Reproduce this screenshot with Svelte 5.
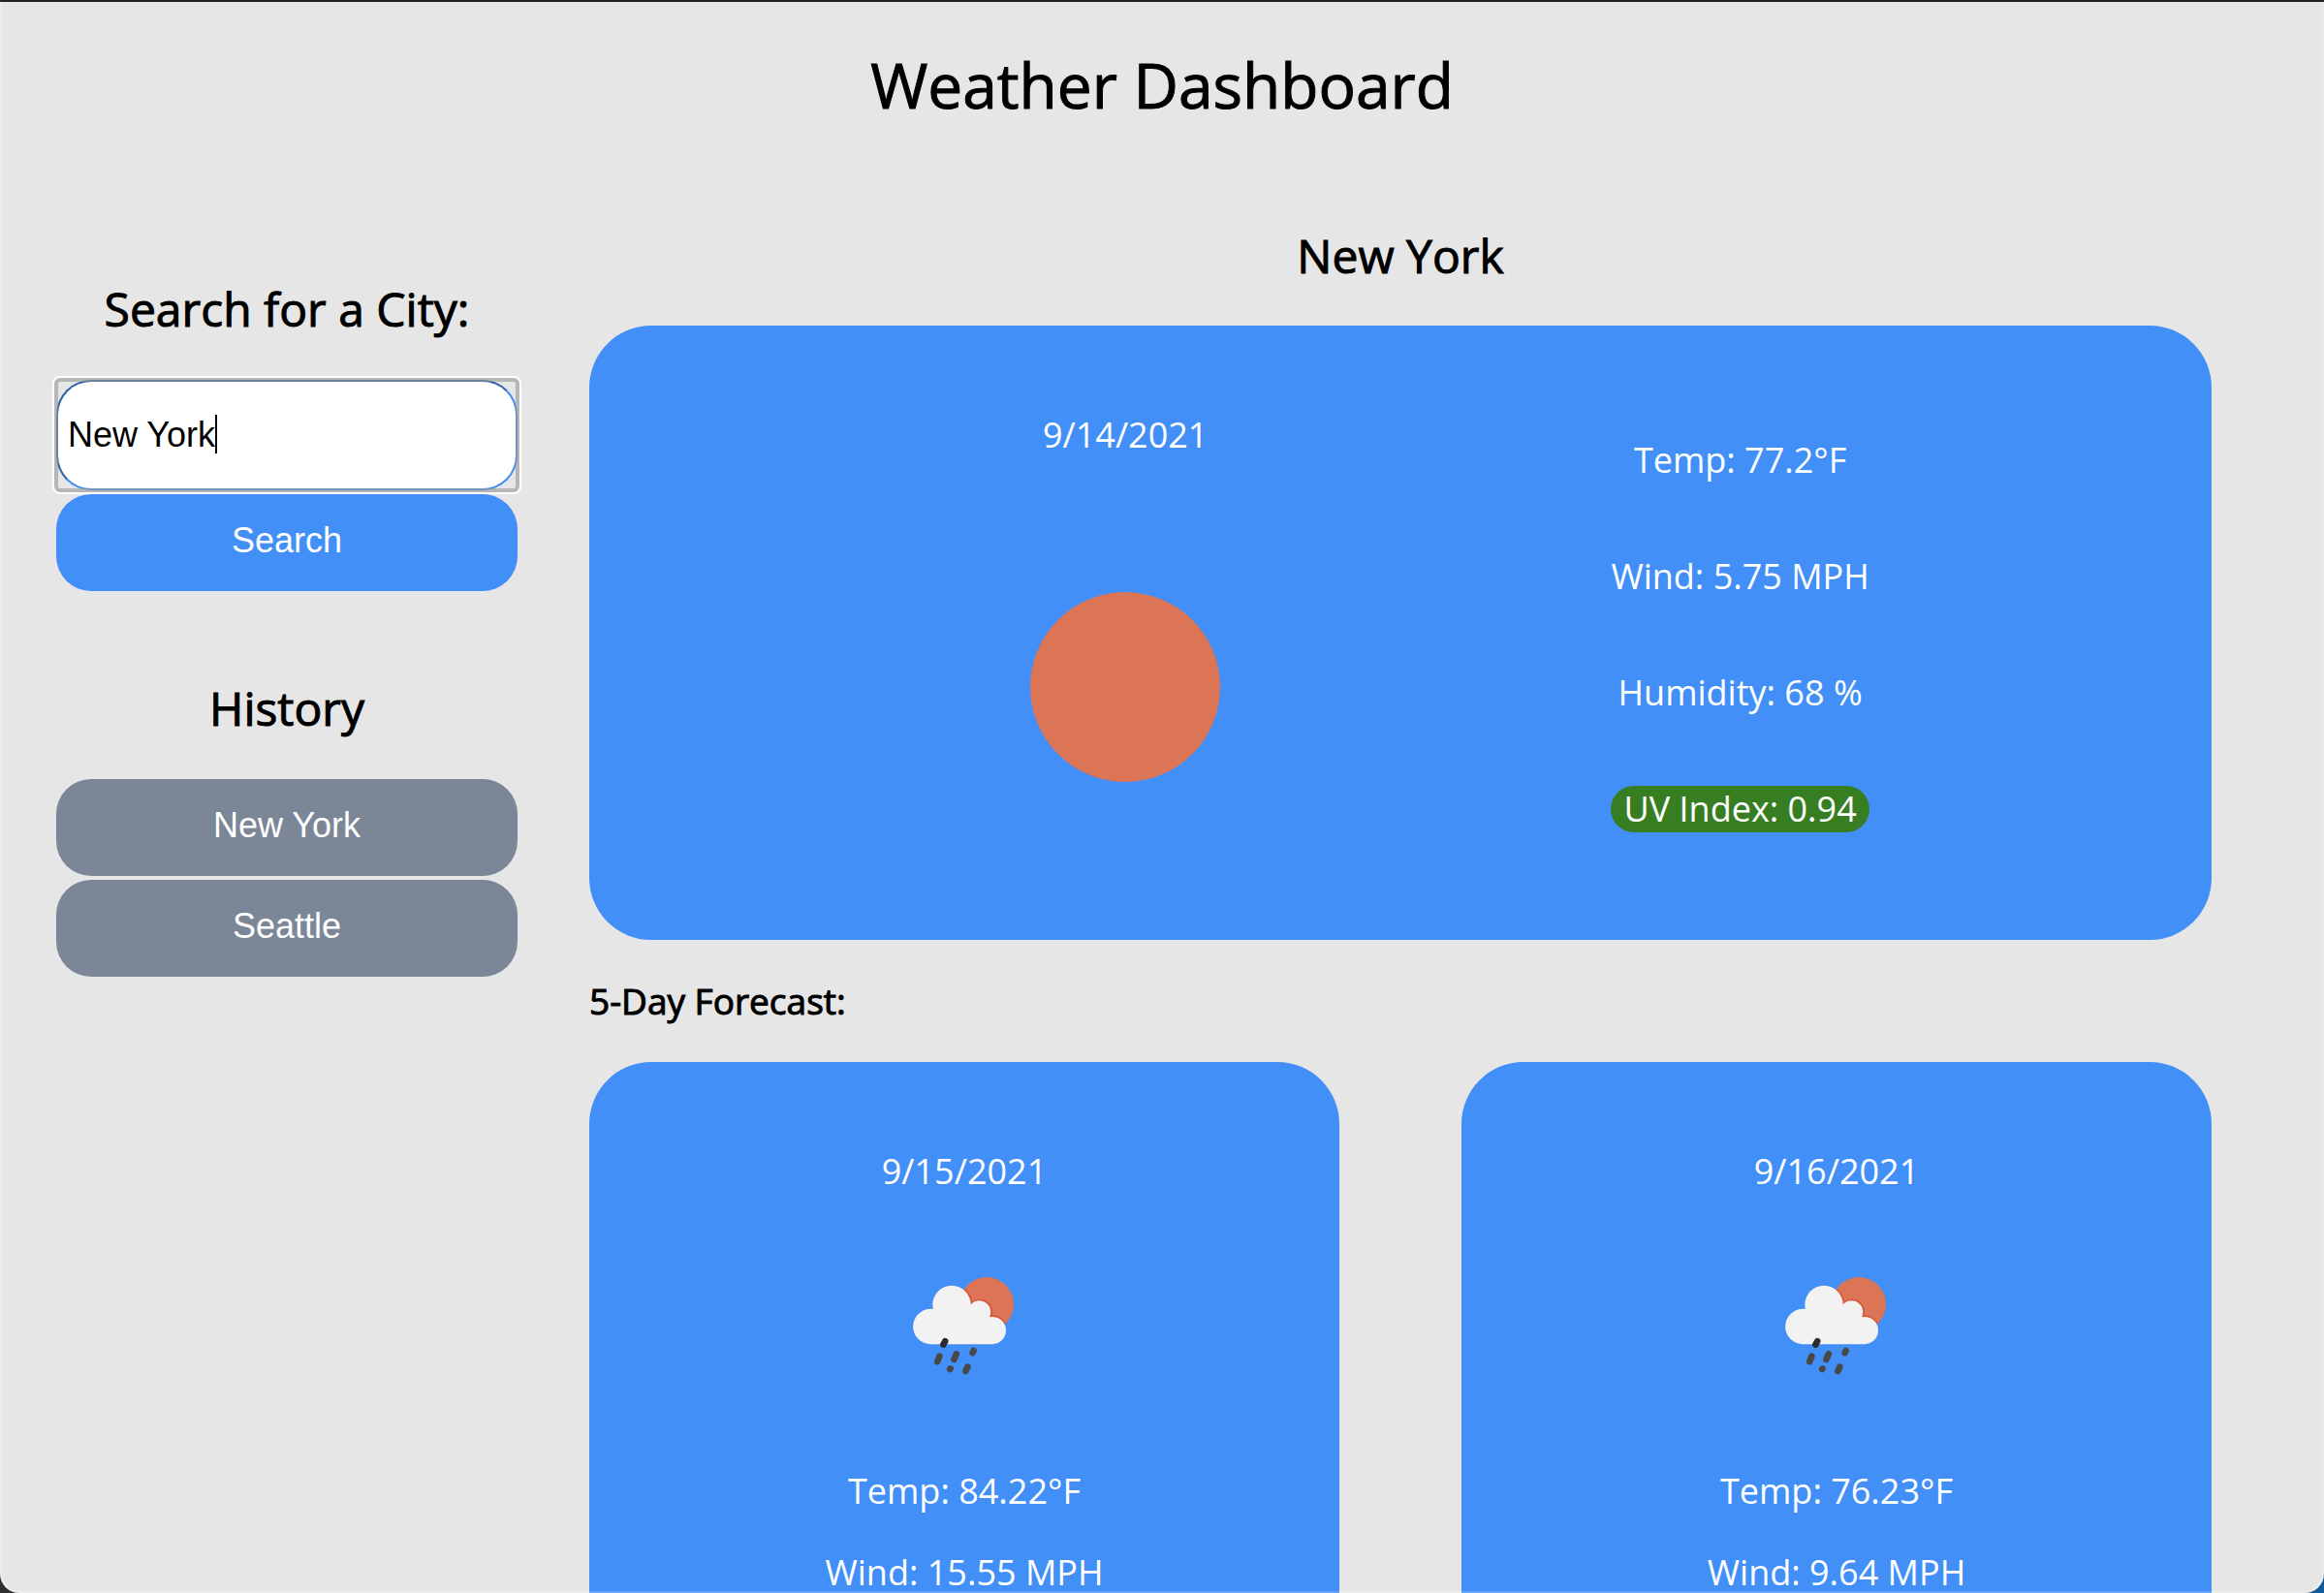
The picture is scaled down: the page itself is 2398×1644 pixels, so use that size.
<script>
  let city = $state('New York');

  const history = ['New York', 'Seattle'];

  const today = {
    date: '9/14/2021',
    temp: '77.2°F',
    wind: '5.75 MPH',
    humidity: '68 %',
    uv: '0.94'
  };

  const forecast = [
    { date: '9/15/2021', temp: '84.22°F', wind: '15.55 MPH' },
    { date: '9/16/2021', temp: '76.23°F', wind: '9.64 MPH' }
  ];
</script>

<div class="window">
  <div class="page">
    <header>
      <h1>Weather Dashboard</h1>
    </header>

    <div class="layout">
      <aside>
        <form onsubmit={(e) => e.preventDefault()}>
          <h2><label for="city">Search for a City:</label></h2>
          <div class="field">
            <input id="city" type="text" autocomplete="off" bind:value={city} />
            <span class="caret"></span>
          </div>
          <button class="btn search" type="submit">Search</button>
        </form>

        <section class="history">
          <h2>History</h2>
          {#each history as name}
            <button class="btn past" type="button">{name}</button>
          {/each}
        </section>
      </aside>

      <main>
        <h2>New York</h2>
        <section class="card today">
          <div class="summary">
            <p>{today.date}</p>
            <svg class="sun" viewBox="0 0 400 400" role="img" aria-label="Clear sky">
              <circle cx="200" cy="200" r="98" fill="#db7555" />
            </svg>
          </div>
          <div class="stats">
            <p>Temp: {today.temp}</p>
            <p>Wind: {today.wind}</p>
            <p>Humidity: {today.humidity}</p>
            <p class="uv">UV Index: {today.uv}</p>
          </div>
        </section>

        <h3>5-Day Forecast:</h3>
        <div class="forecast">
          {#each forecast as day, i}
            <section class="card day">
              <p>{day.date}</p>
              <svg class="rain" viewBox="0 1 200 200" role="img" aria-label="Rain">
                <defs>
                  <clipPath id="sun-{i}"><circle cx="123" cy="78" r="28" /></clipPath>
                </defs>
                <circle cx="123" cy="78" r="28" fill="#db7555" />
                <g clip-path="url(#sun-{i})" fill="#d9583a">
                  <circle cx="87" cy="78.5" r="21.5" />
                  <circle cx="116" cy="86" r="13.2" />
                  <circle cx="129" cy="105" r="15.7" />
                </g>
                <g fill="#f2f2f2">
                  <circle cx="87" cy="78.5" r="19.7" />
                  <circle cx="65.3" cy="101" r="18.2" />
                  <circle cx="115.5" cy="86" r="11.7" />
                  <circle cx="129" cy="105" r="14" />
                  <path d="M65 119.2V96L75 84L116 80L130 95V119.2Z" />
                </g>
                <g stroke="#484848" stroke-width="6.6" stroke-linecap="round">
                  <path d="M80.2 116.2L78.4 119.6" stroke="#2c2c2c" />
                  <path d="M74.4 131.6L72.2 137.2" />
                  <path d="M91.8 129.4L89.4 135" />
                  <path d="M109.6 126L108.6 128.2" />
                  <path d="M85.6 144.4L85.2 145" />
                  <path d="M103.4 142.6L101.4 147" />
                </g>
              </svg>
              <p>Temp: {day.temp}</p>
              <p>Wind: {day.wind}</p>
            </section>
          {/each}
        </div>
      </main>
    </div>
  </div>
</div>

<style>
  :global(body) {
    margin: 0;
    background: linear-gradient(90deg, #2f2f2f 50%, #105a9a 50%);
  }

  .window {
    position: relative;
    box-sizing: border-box;
    height: 100vh;
    border-top: 2px solid #222;
    border-radius: 0 0 20px 20px;
    overflow: hidden;
    background: #e6e6e6;
    color: #000;
    font-family: 'Open Sans', 'Noto Sans', sans-serif;
    font-size: 36px;
    line-height: 48px;
  }

  /* Light rim along the sides and bottom of the window */
  .window::after {
    content: '';
    position: absolute;
    inset: 0;
    border: 2px solid rgba(255, 255, 255, 0.2);
    border-top: 0;
    border-radius: 0 0 20px 20px;
    pointer-events: none;
  }

  .page {
    height: 100%;
    overflow: hidden auto;
    scrollbar-width: none;
  }

  h1,
  h2,
  h3,
  p {
    margin: 0;
  }

  h1,
  h2,
  h3 {
    font-weight: 400;
    -webkit-text-stroke: 1px #000;
  }

  h1 {
    padding-top: 43px;
    font-size: 64px;
    line-height: 86px;
    text-align: center;
  }

  h2 {
    margin-bottom: 40px;
    font-size: 48px;
    line-height: 66px;
    text-align: center;
  }

  main h2 {
    margin-bottom: 39px;
  }

  h3 {
    margin: 36px 0;
    font-size: 37px;
    line-height: 54px;
  }

  .layout {
    display: grid;
    grid-template-columns: 476fr 1674fr;
    column-gap: 74px;
    padding: 100px 116px 0 58px;
  }

  aside {
    padding-top: 55px;
  }

  .field {
    position: relative;
    margin-bottom: 4px;
  }

  .field::after {
    content: '';
    position: absolute;
    inset: -2px;
    border: 4px solid rgba(150, 150, 150, 0.6);
    border-radius: 6px;
    box-shadow: 0 0 0 2px #fff;
    pointer-events: none;
  }

  input,
  .btn {
    display: block;
    box-sizing: border-box;
    width: 100%;
    border-radius: 36px;
    font-family: 'Liberation Sans', Arial, sans-serif;
    font-size: 36px;
    line-height: 40px;
  }

  input {
    height: 114px;
    padding: 0 10px;
    border: 2px solid #428ff7;
    border-top-color: #2a60a8;
    border-left-color: #2a60a8;
    outline: none;
    background: #fff;
    color: #000;
    caret-color: transparent;
  }

  .caret {
    position: absolute;
    top: 36px;
    left: 164px;
    width: 2px;
    height: 40px;
    background: #000;
  }

  .btn {
    margin-bottom: 4px;
    padding: 28px 0 32px;
    border: 0;
    color: #fff;
    cursor: pointer;
  }

  .search {
    background: #428ff7;
  }

  .past {
    background: #7b8797;
  }

  .history {
    margin-top: 88px;
  }

  .card {
    border-radius: 64px;
    background: #428ff7;
    color: #fff;
    text-align: center;
  }

  .today {
    display: flex;
    justify-content: space-evenly;
    padding: 52px;
  }

  .summary {
    padding: 37px 0 9px;
  }

  .sun {
    display: block;
    width: 400px;
    height: 400px;
    margin-top: 36px;
  }

  .stats {
    display: flex;
    flex-direction: column;
    justify-content: center;
    gap: 72px;
    padding-top: 3px;
  }

  .uv {
    padding: 0 13px;
    border-radius: 24px;
    background: #377e22;
  }

  .forecast {
    display: grid;
    grid-template-columns: 1fr 1fr;
    gap: 126px;
  }

  .day {
    display: flex;
    flex-direction: column;
    align-items: center;
    gap: 36px;
    padding: 89px 52px;
  }

  .rain {
    width: 200px;
    height: 200px;
    margin-bottom: 10px;
  }
</style>
